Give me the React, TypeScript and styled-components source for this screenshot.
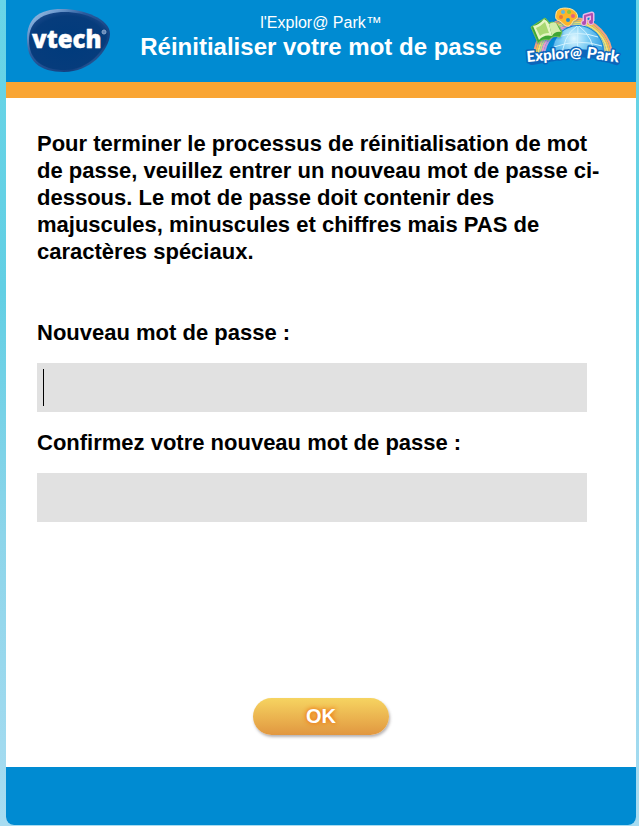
import React from "react";
import styled, { createGlobalStyle } from "styled-components";

const GlobalStyle = createGlobalStyle`
  *, *::before, *::after { box-sizing: border-box; }
  body {
    margin: 0;
    color: #000;
    font-family: "Liberation Sans", Arial, sans-serif;
    background: #a4d9ef;
  }
`;

const Page = styled.div`
  min-height: 100vh;
  display: flex;
  padding: 0 3px 1px 6px;
  background: linear-gradient(#69d5e7 0%, #62cfe4 35%, #8dd5ea 65%, #a8dcf1 100%);
`;

const Panel = styled.main`
  flex: 1;
  display: flex;
  flex-direction: column;
  overflow: hidden;
  border-radius: 0 0 8px 8px;
  background: #fff;
`;

const Header = styled.header`
  display: grid;
  grid-template-columns: 100px 1fr 100px;
  gap: 12px;
  height: 98px;
  padding: 0 11px;
  color: #fff;
  background: #008bd2;
  border-bottom: 16px solid #f9a533;
`;

const LogoSlot = styled.div`
  display: flex;
  justify-content: center;

  svg { display: block; flex: none; }
`;

const Heading = styled.div`
  display: flex;
  flex-direction: column;
  align-items: center;
  padding-top: 13px;
  white-space: nowrap;
`;

const Product = styled.p`
  margin: 0;
  font-size: 16px;
  line-height: 20px;
`;

const Title = styled.h1`
  margin: 0;
  font-size: 24px;
  line-height: 28px;
`;

const Form = styled.form`
  flex: 1;
  display: flex;
  flex-direction: column;
  padding: 32px 31px;
`;

const Intro = styled.p`
  margin: 0 0 54px;
  font-size: 22px;
  line-height: 27px;
  font-weight: bold;
`;

const Field = styled.div`
  display: flex;
  flex-direction: column;
  gap: 17px;
  margin: 0 18px 17px 0;
`;

const Label = styled.label`
  font-size: 22px;
  line-height: 27px;
  font-weight: bold;
`;

const InputBox = styled.div`
  position: relative;
  display: flex;
`;

const PasswordInput = styled.input`
  flex: 1;
  min-width: 0;
  height: 49px;
  padding: 0 6px;
  border: 0;
  outline: 0;
  border-radius: 0;
  background: #e1e1e1;
  font: 32px "Liberation Sans", Arial, sans-serif;
  caret-color: transparent;
`;

const Caret = styled.span`
  position: absolute;
  left: 6px;
  top: 6px;
  bottom: 6px;
  width: 1px;
  background: #000;
  pointer-events: none;
`;

const SubmitButton = styled.button`
  align-self: center;
  width: 136px;
  height: 37px;
  margin-top: auto;
  padding: 0;
  border: 0;
  border-radius: 19px;
  color: #fff;
  font: bold 20px "Liberation Sans", Arial, sans-serif;
  text-shadow: 0 0 4px #ee7d18, 0 0 5px #ee7d18;
  background: linear-gradient(#f6d461, #e19740);
  box-shadow: 1px 2px 3px rgba(90, 80, 80, 0.45);
  cursor: pointer;
`;

const Footer = styled.footer`
  height: 58px;
  background: #008bd2;
`;

const VtechLogo = () => (
  <svg width="90" height="80" viewBox="0 0 90 80" role="img" aria-label="vtech">
    <defs>
      <linearGradient id="rim" x1="0" y1="0" x2="1" y2="1">
        <stop offset="0" stopColor="#a9cbe9" />
        <stop offset=".2" stopColor="#6f9bcf" />
        <stop offset=".38" stopColor="#2a5a9c" />
        <stop offset=".75" stopColor="#123f80" />
        <stop offset="1" stopColor="#5285bc" />
      </linearGradient>
      <radialGradient id="pebble" cx=".5" cy=".55" r=".6">
        <stop offset="0" stopColor="#003b7c" />
        <stop offset=".8" stopColor="#063c7c" />
        <stop offset="1" stopColor="#1c4a8b" />
      </radialGradient>
    </defs>
    <path d="M40 9C62 9 88 19 88 34C87 51 68 72 42 72C17 72 5 61 5 39C5 19 16 9 40 9Z" fill="url(#rim)" />
    <path d="M43 12C62 12 86 21 86 34C84 50 66 70 43 70C20 70 7 60 7 40C7 21 21 12 43 12Z" fill="url(#pebble)" />
    <text x="10" y="48" fill="#fff" stroke="#fff" strokeWidth=".4" fontFamily="Open Sans, sans-serif" fontWeight="800" fontSize="24">vtech</text>
    <circle cx="82" cy="32" r="2" fill="#6287b9" stroke="#8ba6ca" />
  </svg>
);

const ParkLogo = () => (
  <svg width="100" height="80" viewBox="0 0 100 80" role="img" aria-label="Explor@ Park">
    <defs>
      <radialGradient id="globe" cx=".42" cy=".25" r=".7">
        <stop offset="0" stopColor="#e2f8ff" />
        <stop offset=".4" stopColor="#7ccdf4" />
        <stop offset="1" stopColor="#1d90dc" />
      </radialGradient>
      <clipPath id="horizon"><path d="M0 0H100V57H0Z" /></clipPath>
      <filter id="shade" x="-20%" y="-30%" width="140%" height="160%">
        <feDropShadow dx="0" dy="1" stdDeviation="1" floodColor="#0760ad" floodOpacity=".6" />
      </filter>
    </defs>
    <g clipPath="url(#horizon)">
      <g fill="none" strokeWidth="2">
        <circle cx="48" cy="57" r="39" stroke="#f3a184" />
        <circle cx="48" cy="57" r="37" stroke="#fbb94e" />
        <circle cx="48" cy="57" r="35" stroke="#f8de70" />
        <circle cx="48" cy="57" r="33" stroke="#c5d68f" />
        <circle cx="48" cy="57" r="31" stroke="#ee9ac8" />
        <circle cx="48" cy="57" r="29" stroke="#bd9cdc" />
      </g>
      <circle cx="53" cy="51" r="26" fill="#1387d6" />
      <circle cx="53" cy="51" r="25" fill="url(#globe)" />
      <path
        d="M33 37Q53 30 73 37M29 47Q53 38 77 46M52 26Q37 36 37 60M53 26Q52 42 53 60M54 26Q69 37 70 60"
        fill="none" stroke="#d3f3ff" strokeWidth="1"
      />
    </g>
    <path
      d="M7 61Q28 57 46 54T91 61"
      fill="none" stroke="#0c66bb" strokeWidth="8" strokeLinecap="round" strokeLinejoin="round"
    />
    <g filter="url(#shade)">
      <path d="M31 14C31 8 40 7 46 9C52 11 55 18 50 20C47 20 48 24 44 26C40 27 38 23 35 21C31 20 30 18 31 14Z" fill="#fbb52a" stroke="#ffe9a0" />
      <circle cx="38" cy="12" r="2" fill="#5fb7e0" /><circle cx="44" cy="12" r="2" fill="#8dc63f" />
      <circle cx="48" cy="16" r="2" fill="#e6637c" /><circle cx="36" cy="17" r="2" fill="#e8743a" />
      <circle cx="43" cy="20" r="2" fill="#1d8fd0" />
    </g>
    <g strokeLinejoin="round">
      <path d="M60 23V16L67 14V21" fill="none" stroke="#eab8e6" strokeWidth="5" />
      <circle cx="59" cy="23" r="3" fill="#eab8e6" /><circle cx="66" cy="22" r="3" fill="#eab8e6" />
      <path d="M60 23V16L67 14V21" fill="none" stroke="#b04db2" strokeWidth="2" />
      <circle cx="59" cy="23" r="2" fill="#b04db2" /><circle cx="66" cy="22" r="2" fill="#b04db2" />
    </g>
    <g filter="url(#shade)">
      <path d="M6 27L20 18Q23 20 24 23Q31 19 37 32L35 37Q27 35 24 40Q18 38 13 43Z" fill="#3fa535" stroke="#6fc04a" />
      <path d="M8 26Q14 25 19 19Q23 21 24 24L27 36Q19 34 14 40Z" fill="#e6f5c4" />
      <path d="M24 24Q28 21 31 23L36 32Q30 31 27 36Z" fill="#d3edaa" />
      <path d="M11 28Q16 26 20 22L24 33Q18 33 15 36Z" fill="#a9d872" />
    </g>
    <g
      fill="#fff" stroke="#0c66bb" strokeWidth="3" strokeLinejoin="round" paintOrder="stroke"
      fontFamily="Lato, Open Sans, sans-serif" fontSize="15" fontWeight="900"
    >
      <text x="2" y="62" transform="rotate(-5 2 62)">Explor</text>
      <text x="45" y="58" fontSize="14">@</text>
      <text x="61" y="58" fontSize="16" transform="rotate(8 61 58)">Park</text>
    </g>
  </svg>
);

export default function App() {
  return (
    <>
      <GlobalStyle />
      <Page>
        <Panel>
          <Header>
            <LogoSlot><VtechLogo /></LogoSlot>
            <Heading>
              <Product>l'Explor@ Park™</Product>
              <Title>Réinitialiser votre mot de passe</Title>
            </Heading>
            <LogoSlot><ParkLogo /></LogoSlot>
          </Header>
          <Form onSubmit={(event) => event.preventDefault()}>
            <Intro>
              Pour terminer le processus de réinitialisation de mot de passe, veuillez entrer un
              nouveau mot de passe ci-dessous. Le mot de passe doit contenir des majuscules,
              minuscules et chiffres mais PAS de caractères spéciaux.
            </Intro>
            <Field>
              <Label htmlFor="password">Nouveau mot de passe :</Label>
              <InputBox>
                <PasswordInput id="password" type="password" />
                <Caret />
              </InputBox>
            </Field>
            <Field>
              <Label htmlFor="confirm">Confirmez votre nouveau mot de passe :</Label>
              <InputBox>
                <PasswordInput id="confirm" type="password" />
              </InputBox>
            </Field>
            <SubmitButton type="submit">OK</SubmitButton>
          </Form>
          <Footer />
        </Panel>
      </Page>
    </>
  );
}
